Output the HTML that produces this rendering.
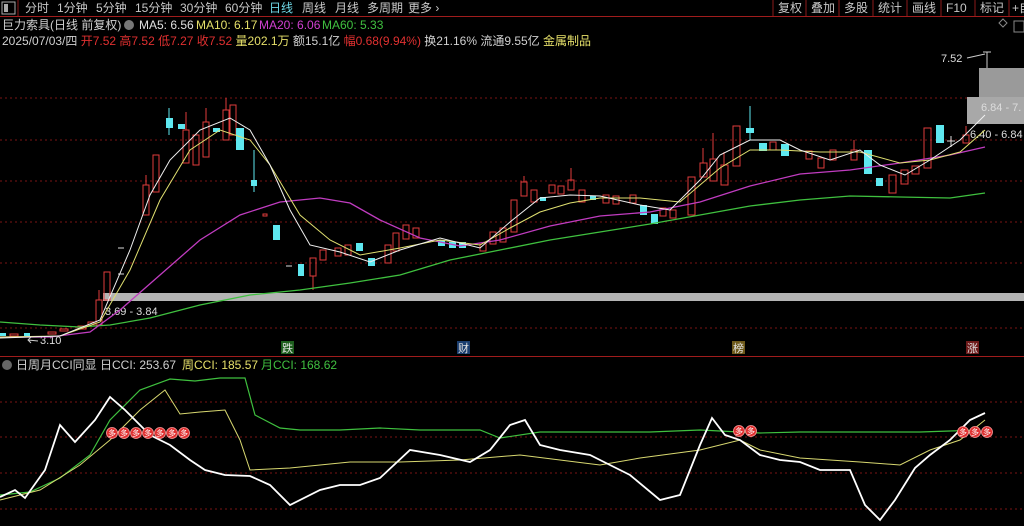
<!DOCTYPE html>
<html><head><meta charset="utf-8"><style>
body{margin:0;background:#000;width:1024px;height:526px;overflow:hidden;font-family:"Liberation Sans","Noto Sans CJK SC",sans-serif;}
svg{position:absolute;left:0;top:0}
text{font-family:"Liberation Sans","Noto Sans CJK SC",sans-serif}
</style></head><body>
<svg width="1024" height="526" viewBox="0 0 1024 526">
<rect x="2" y="2" width="13" height="12" fill="none" stroke="#aaa"/>
<rect x="4" y="4" width="4" height="8" fill="#aaa"/>
<line x1="18" y1="0" x2="18" y2="16" stroke="#8b1a1a"/>
<line x1="0" y1="16.5" x2="1024" y2="16.5" stroke="#a01c1c"/>
<g font-size="12" fill="#c8c8c8">
<text x="25" y="12">分时</text><text x="57" y="12">1分钟</text><text x="96" y="12">5分钟</text>
<text x="135" y="12">15分钟</text><text x="180" y="12">30分钟</text><text x="225" y="12">60分钟</text>
<text x="269" y="12" fill="#6fd8e6">日线</text><text x="302" y="12">周线</text><text x="335" y="12">月线</text>
<text x="367" y="12">多周期</text><text x="408" y="12">更多 ›</text>
<text x="778" y="12">复权</text><text x="811" y="12">叠加</text><text x="844" y="12">多股</text>
<text x="878" y="12">统计</text><text x="912" y="12">画线</text><text x="946" y="12">F10</text>
<text x="980" y="12">标记</text><text x="1012" y="12">+自</text>
</g>
<g stroke="#8b1a1a"><line x1="773" y1="0" x2="773" y2="16"/><line x1="806" y1="0" x2="806" y2="16"/><line x1="839" y1="0" x2="839" y2="16"/><line x1="873" y1="0" x2="873" y2="16"/><line x1="907" y1="0" x2="907" y2="16"/><line x1="941" y1="0" x2="941" y2="16"/><line x1="975" y1="0" x2="975" y2="16"/><line x1="1009" y1="0" x2="1009" y2="16"/></g>
<g font-size="12">
<text x="2" y="29" fill="#d0d0d0">巨力索具(日线 前复权)</text>
<circle cx="129" cy="25" r="5" fill="#777"/>
<text x="139" y="29" fill="#e0e0e0">MA5: 6.56</text>
<text x="196" y="29" fill="#e6e06a">MA10: 6.17</text>
<text x="259" y="29" fill="#d040d0">MA20: 6.06</text>
<text x="322" y="29" fill="#40c040">MA60: 5.33</text>
<text x="2" y="45" fill="#d0d0d0">2025/07/03/四 <tspan fill="#e03030">开7.52 高7.52 低7.27 收7.52</tspan> <tspan fill="#e6e06a">量202.1万</tspan> 额15.1亿 <tspan fill="#e03030">幅0.68(9.94%)</tspan> 换21.16% 流通9.55亿 <tspan fill="#e6e06a">金属制品</tspan></text>
</g>
<path d="M1003 27 l-4 -4 l4 -4 l4 4z" fill="none" stroke="#888"/>
<rect x="1014" y="21" width="10" height="11" fill="none" stroke="#888"/>
<g stroke="#7a1515" stroke-dasharray="2,3">
<line x1="0" y1="98" x2="1024" y2="98"/><line x1="0" y1="140" x2="1024" y2="140"/>
<line x1="0" y1="181" x2="1024" y2="181"/><line x1="0" y1="222" x2="1024" y2="222"/>
<line x1="0" y1="263" x2="1024" y2="263"/><line x1="0" y1="328" x2="1024" y2="328"/>
<line x1="0" y1="402" x2="1024" y2="402"/><line x1="0" y1="437" x2="1024" y2="437"/>
<line x1="0" y1="473" x2="1024" y2="473"/><line x1="0" y1="509" x2="1024" y2="509"/>
</g>
<rect x="103" y="293" width="921" height="8" fill="#b4b4b4"/>
<rect x="979" y="68" width="45" height="29" fill="#9a9a9a"/>
<rect x="967" y="97" width="57" height="27" fill="#a8a8a8"/>
<text x="981" y="111" font-size="11" fill="#ddd">6.84 - 7.</text>
<text x="970" y="138" font-size="11" fill="#ddd">6.40 - 6.84</text>
<text x="941" y="62" font-size="11" fill="#ddd">7.52</text>
<path d="M967 58 L985 54 M987 52 L987 68 M983 52 L991 52" stroke="#ccc" fill="none"/>
<text x="105" y="315" font-size="11" fill="#ddd">3.69 - 3.84</text>
<text x="40" y="344" font-size="11" fill="#ddd">3.10</text>
<path d="M28 340 L38 341 M31 337 l-3 3 l3 3" stroke="#ccc" fill="none"/>
<g stroke="#e03c3c" fill="none" stroke-width="1">
<rect x="96" y="300" width="6" height="25"/><line x1="99" y1="290" x2="99" y2="300"/>
<rect x="104" y="272" width="6" height="28"/>
<rect x="143" y="185" width="6" height="30"/><line x1="146" y1="175" x2="146" y2="185"/>
<rect x="153" y="155" width="6" height="37"/>
<rect x="183" y="130" width="6" height="33"/><line x1="186" y1="112" x2="186" y2="130"/>
<rect x="193" y="135" width="6" height="30"/>
<rect x="203" y="122" width="6" height="35"/><line x1="206" y1="108" x2="206" y2="122"/>
<rect x="223" y="110" width="6" height="30"/><line x1="226" y1="98" x2="226" y2="110"/>
<rect x="230" y="105" width="6" height="30"/>
<rect x="263" y="214" width="4" height="2"/>
<rect x="310" y="258" width="6" height="18"/><line x1="313" y1="276" x2="313" y2="290"/>
<rect x="320" y="250" width="6" height="10"/>
<rect x="335" y="248" width="6" height="8"/>
<rect x="345" y="245" width="6" height="10"/>
<rect x="385" y="245" width="6" height="18"/>
<rect x="393" y="233" width="6" height="18"/>
<rect x="403" y="225" width="6" height="14"/>
<rect x="413" y="228" width="6" height="10"/>
<rect x="480" y="243" width="6" height="8"/>
<rect x="490" y="232" width="6" height="12"/>
<rect x="500" y="228" width="6" height="14"/>
<rect x="511" y="200" width="6" height="32"/>
<rect x="521" y="182" width="6" height="14"/><line x1="524" y1="176" x2="524" y2="182"/>
<rect x="531" y="190" width="6" height="12"/>
<rect x="549" y="185" width="6" height="8"/>
<rect x="558" y="186" width="6" height="8"/>
<rect x="568" y="180" width="6" height="10"/><line x1="571" y1="168" x2="571" y2="180"/>
<rect x="579" y="190" width="6" height="12"/>
<rect x="603" y="195" width="6" height="8"/>
<rect x="613" y="196" width="6" height="8"/>
<rect x="630" y="195" width="6" height="8"/>
<rect x="660" y="208" width="6" height="8"/>
<rect x="670" y="210" width="6" height="8"/>
<rect x="688" y="177" width="7" height="38"/>
<rect x="700" y="163" width="7" height="14"/><line x1="703" y1="148" x2="703" y2="163"/>
<rect x="710" y="159" width="7" height="22"/><line x1="713" y1="133" x2="713" y2="159"/>
<rect x="721" y="165" width="7" height="20"/><line x1="724" y1="152" x2="724" y2="165"/>
<rect x="733" y="126" width="7" height="40"/>
<rect x="770" y="142" width="6" height="8"/>
<rect x="806" y="151" width="6" height="8"/>
<rect x="818" y="158" width="6" height="10"/>
<rect x="830" y="150" width="6" height="10"/>
<rect x="851" y="150" width="6" height="10"/><line x1="854" y1="140" x2="854" y2="150"/>
<rect x="889" y="175" width="7" height="18"/>
<rect x="901" y="170" width="7" height="14"/>
<rect x="912" y="166" width="7" height="8"/>
<rect x="924" y="128" width="7" height="40"/>
<rect x="963" y="135" width="6" height="8"/><line x1="966" y1="126" x2="966" y2="135"/>
<rect x="10" y="334" width="8" height="2"/><rect x="48" y="332" width="8" height="2"/><rect x="60" y="329" width="8" height="2"/><rect x="78" y="326" width="8" height="3"/><rect x="88" y="322" width="6" height="4"/>
</g>
<g fill="#5ee8f0">
<rect x="166" y="118" width="7" height="10"/><line x1="169" y1="108" x2="169" y2="135" stroke="#5ee8f0"/>
<rect x="178" y="124" width="7" height="5"/>
<rect x="213" y="128" width="7" height="4"/>
<rect x="236" y="128" width="8" height="22"/>
<rect x="251" y="180" width="6" height="6"/><line x1="254" y1="150" x2="254" y2="192" stroke="#5ee8f0"/>
<rect x="273" y="225" width="7" height="15"/>
<rect x="298" y="264" width="6" height="12"/>
<rect x="356" y="243" width="7" height="8"/>
<rect x="368" y="258" width="7" height="8"/>
<rect x="438" y="240" width="7" height="6"/><rect x="449" y="242" width="7" height="6"/><rect x="459" y="242" width="7" height="6"/>
<rect x="540" y="197" width="6" height="4"/><rect x="590" y="196" width="6" height="4"/>
<rect x="640" y="205" width="7" height="10"/><rect x="651" y="214" width="7" height="10"/>
<rect x="746" y="128" width="8" height="5"/><line x1="750" y1="106" x2="750" y2="140" stroke="#5ee8f0"/>
<rect x="759" y="143" width="8" height="8"/>
<rect x="781" y="144" width="8" height="12"/>
<rect x="864" y="150" width="8" height="24"/>
<rect x="876" y="178" width="7" height="8"/>
<rect x="936" y="125" width="8" height="18"/>
<rect x="0" y="333" width="6" height="3"/><rect x="24" y="333" width="6" height="3"/>
</g>
<g stroke="#ddd"><line x1="118" y1="248" x2="124" y2="248"/><line x1="118" y1="274" x2="124" y2="274"/><line x1="286" y1="266" x2="292" y2="266"/><line x1="947" y1="141" x2="955" y2="141"/><line x1="951" y1="136" x2="951" y2="147"/></g>
<polyline fill="none" stroke="#3fc03f" stroke-width="1.3" points="0,322 40,325 80,327 110,325 150,318 200,305 250,295 300,290 350,283 400,275 450,260 500,250 550,240 600,232 650,224 700,215 750,206 800,200 850,196 900,197 950,198 985,193"/>
<polyline fill="none" stroke="#c03cc0" stroke-width="1.3" points="0,337 50,337 90,332 120,310 160,275 200,240 240,215 280,202 320,198 350,203 380,220 420,238 460,246 500,240 550,226 600,216 650,212 700,202 750,186 800,174 850,170 900,163 950,155 985,147"/>
<polyline fill="none" stroke="#e0e070" stroke-width="1" points="0,337 60,336 100,322 130,270 160,200 190,150 220,130 250,140 270,165 300,215 330,240 360,255 400,248 440,240 480,245 510,228 540,212 570,203 600,198 640,198 680,202 700,185 720,168 750,150 780,150 820,152 860,152 900,163 930,160 960,152 985,130"/>
<polyline fill="none" stroke="#f0f0f0" stroke-width="1" points="0,338 60,336 100,320 130,250 150,195 170,160 200,130 230,118 250,130 270,165 290,210 310,245 340,252 370,262 400,250 440,238 480,248 510,222 540,198 570,195 600,196 640,205 670,210 700,180 720,155 750,140 780,140 800,150 830,160 860,150 880,165 905,175 930,160 960,140 985,115"/>
<rect x="281" y="341" width="13" height="13" fill="#1d5e1d"/><text x="282" y="352" font-size="11" fill="#e0e0e0">跌</text>
<rect x="457" y="341" width="13" height="13" fill="#1a3d6e"/><text x="458" y="352" font-size="11" fill="#e0e0e0">财</text>
<rect x="732" y="341" width="13" height="13" fill="#6e5a1a"/><text x="733" y="352" font-size="11" fill="#e0e0e0">榜</text>
<rect x="966" y="341" width="13" height="13" fill="#6e1a1a"/><text x="967" y="352" font-size="11" fill="#e0e0e0">涨</text>
<line x1="0" y1="356.5" x2="1024" y2="356.5" stroke="#a01c1c"/>
<circle cx="7" cy="365" r="5" fill="#666"/>
<g font-size="12"><text x="16" y="369" fill="#d0d0d0">日周月CCI同显 日CCI: 253.67</text>
<text x="182" y="369" fill="#e6e06a">周CCI: 185.57</text><text x="261" y="369" fill="#40c040">月CCI: 168.62</text></g>
<polyline fill="none" stroke="#3fc03f" stroke-width="1.2" points="0,495 30,492 60,478 90,455 110,420 140,390 170,379 195,381 220,378 245,378 255,415 280,428 300,430 340,430 380,428 420,430 480,430 500,438 540,432 600,432 650,432 700,430 760,433 800,432 860,432 920,432 980,430"/>
<polyline fill="none" stroke="#d8d870" stroke-width="1" points="0,500 40,490 80,465 110,440 140,410 165,390 180,414 200,412 225,410 240,440 250,470 290,468 350,462 400,462 460,460 520,455 560,460 600,465 640,458 700,450 740,440 760,450 800,458 860,462 900,465 930,450 960,440 985,420"/>
<polyline fill="none" stroke="#ffffff" stroke-width="1.8" points="0,497 15,490 25,498 45,470 60,425 75,442 95,420 110,397 125,410 140,425 150,435 170,445 190,460 205,470 225,475 250,476 270,485 290,505 320,490 340,485 360,485 380,478 410,450 440,455 470,462 490,450 510,425 525,420 540,445 560,450 590,455 610,465 630,475 660,500 680,495 700,445 712,418 725,435 740,440 760,455 780,460 800,462 820,470 850,470 865,505 880,520 895,500 915,468 930,455 950,440 970,420 985,413"/>
<g font-size="8" fill="#fff">
<g fill="#e03030" stroke="#ff9a9a" stroke-width="0.8">
<circle cx="112" cy="433" r="5.5"/><circle cx="124" cy="433" r="5.5"/><circle cx="136" cy="433" r="5.5"/><circle cx="148" cy="433" r="5.5"/><circle cx="160" cy="433" r="5.5"/><circle cx="172" cy="433" r="5.5"/><circle cx="184" cy="433" r="5.5"/>
<circle cx="739" cy="431" r="5.5"/><circle cx="751" cy="431" r="5.5"/>
<circle cx="963" cy="432" r="5.5"/><circle cx="975" cy="432" r="5.5"/><circle cx="987" cy="432" r="5.5"/>
</g>
<text x="108" y="436">多</text><text x="120" y="436">多</text><text x="132" y="436">多</text><text x="144" y="436">多</text><text x="156" y="436">多</text><text x="168" y="436">多</text><text x="180" y="436">多</text>
<text x="735" y="434">多</text><text x="747" y="434">多</text>
<text x="959" y="435">多</text><text x="971" y="435">多</text><text x="983" y="435">多</text>
</g>
</svg>
</body></html>
